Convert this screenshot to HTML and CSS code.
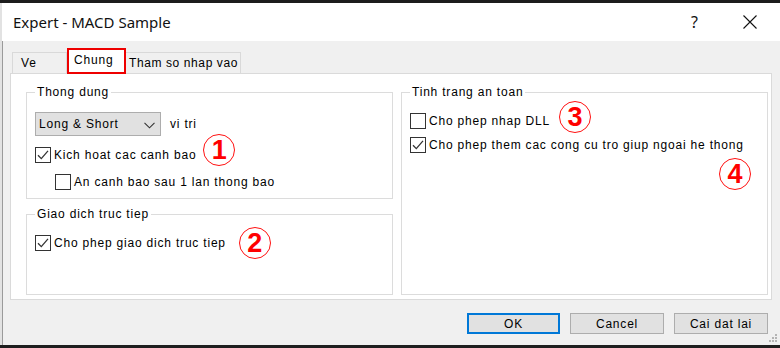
FILE: index.html
```html
<!DOCTYPE html>
<html>
<head>
<meta charset="utf-8">
<link rel="stylesheet" href="styles.css">
</head>
<body>
<div class="topbar"></div>
<div class="titlebar">
  <span class="title">Expert - MACD Sample</span>
  <span class="help">?</span>
  <span class="close"><svg width="14" height="14" viewBox="0 0 14 14"><path d="M0.5 0.5 L13.5 13.5 M13.5 0.5 L0.5 13.5" stroke="#111" stroke-width="1.1" fill="none"/></svg></span>
</div>
<div class="main">
  <div class="tabs">
    <div class="tab tab-ve">Ve</div>
    <div class="tab active">Chung</div>
    <div class="tab tab-tham">Tham so nhap vao</div>
  </div>
  <div class="panel">
    <div class="col">
      <fieldset class="group g1">
        <legend>Thong dung</legend>
        <div class="row">
          <div class="select"><span>Long &amp; Short</span><svg width="11" height="7" viewBox="0 0 11 7"><path d="M0.5 0.8 L5.5 5.8 L10.5 0.8" stroke="#333" stroke-width="1.1" fill="none"/></svg></div>
          <span class="after-select">vi tri</span>
        </div>
        <div class="row">
          <svg class="cb" width="16" height="16" viewBox="0 0 16 16"><rect x="0.5" y="0.5" width="15" height="15" fill="#fff" stroke="#333"/><path d="M3 8.2 L6.3 11.6 L13 3.8" stroke="#333" stroke-width="1.3" fill="none"/></svg>
          <span class="lbl">Kich hoat cac canh bao</span>
          <span class="mark m1">1</span>
        </div>
        <div class="row indent">
          <svg class="cb" width="16" height="16" viewBox="0 0 16 16"><rect x="0.5" y="0.5" width="15" height="15" fill="#fff" stroke="#333"/></svg>
          <span class="lbl">An canh bao sau 1 lan thong bao</span>
        </div>
      </fieldset>
      <fieldset class="group g2">
        <legend>Giao dich truc tiep</legend>
        <div class="row">
          <svg class="cb" width="16" height="16" viewBox="0 0 16 16"><rect x="0.5" y="0.5" width="15" height="15" fill="#fff" stroke="#333"/><path d="M3 8.2 L6.3 11.6 L13 3.8" stroke="#333" stroke-width="1.3" fill="none"/></svg>
          <span class="lbl">Cho phep giao dich truc tiep</span>
          <span class="mark m2">2</span>
        </div>
      </fieldset>
    </div>
    <fieldset class="group g3">
      <legend>Tinh trang an toan</legend>
      <div class="row">
        <svg class="cb" width="16" height="16" viewBox="0 0 16 16"><rect x="0.5" y="0.5" width="15" height="15" fill="#fff" stroke="#333"/></svg>
        <span class="lbl">Cho phep nhap DLL</span>
        <span class="mark m3">3</span>
      </div>
      <div class="row">
        <svg class="cb" width="16" height="16" viewBox="0 0 16 16"><rect x="0.5" y="0.5" width="15" height="15" fill="#fff" stroke="#333"/><path d="M3 8.2 L6.3 11.6 L13 3.8" stroke="#333" stroke-width="1.3" fill="none"/></svg>
        <span class="lbl">Cho phep them cac cong cu tro giup ngoai he thong</span>
      </div>
      <div class="mark-row"><span class="mark m4">4</span></div>
    </fieldset>
  </div>
  <div class="buttons">
    <div class="btn default">OK</div>
    <div class="btn">Cancel</div>
    <div class="btn">Cai dat lai</div>
  </div>
  <svg class="grip" width="8" height="8" viewBox="0 0 8 8"><g fill="#b4b4b4"><rect x="6" y="0" width="2" height="2"/><rect x="3" y="3" width="2" height="2"/><rect x="6" y="3" width="2" height="2"/><rect x="0" y="6" width="2" height="2"/><rect x="3" y="6" width="2" height="2"/><rect x="6" y="6" width="2" height="2"/></g></svg>
</div>
<div class="bottombar"></div>
</body>
</html>
```
FILE: styles.css
```css
* { box-sizing: border-box; }
html, body { margin: 0; padding: 0; }
body {
  width: 780px;
  height: 348px;
  overflow: hidden;
  background: #f0f0f0;
  font-family: "Liberation Sans", Arial, sans-serif;
  font-size: 12px;
  color: #000;
}
.topbar { height: 3px; background: #1c1c1c; }
.bottombar { height: 3px; background: #1e1e1e; }
.titlebar {
  height: 38px;
  background: #fff;
  display: flex;
  align-items: center;
  padding-left: 13px;
  border-left: 2px solid #e2e2e2;
}
.title {
  font-family: "Noto Sans", "Open Sans", sans-serif;
  font-size: 15px;
  color: #111;
  flex: 1;
  margin-left: -2px;
}
.help {
  font-family: "Noto Sans", sans-serif;
  font-size: 16px;
  color: #111;
  margin-right: 45px;
}
.close { display: flex; margin-right: 23px; }
.main {
  position: relative;
  height: 304px;
  border-left: 2px solid #e2e2e2;
  box-shadow: inset 1px 0 0 #9a9a9a;
  padding-top: 7px;
  letter-spacing: 0.8px;
}
.tabs {
  display: flex;
  align-items: flex-end;
  height: 26px;
  padding-left: 10px;
}
.tab {
  height: 21px;
  margin-bottom: 1px;
  border: 1px solid #d9d9d9;
  border-bottom: none;
  background: #f0f0f0;
  display: flex;
  align-items: center;
  padding-left: 8px;
}
.tab-ve { width: 55px; }
.tab-tham { width: 116px; margin-left: -1px; padding-left: 3px; letter-spacing: 0.6px; }
.tab.active {
  position: relative;
  z-index: 1;
  height: 26px;
  width: 59px;
  margin-bottom: 0;
  background: #fff;
  border: 2px solid #ee0000;
  padding-left: 5px;
  padding-bottom: 3px;
}
.panel {
  margin-top: -1px;
  margin-left: 8px;
  width: 762px;
  height: 227px;
  background: #fff;
  border: 1px solid #dadada;
  padding: 11px 3px 4px 15px;
  display: flex;
  gap: 8px;
}
.col { display: flex; flex-direction: column; gap: 8px; }
.group {
  margin: 0;
  width: 367px;
  min-width: 0;
  border: 1px solid #dcdcdc;
  padding: 13px 8px 0 8px;
  display: flex;
  flex-direction: column;
}
.group legend {
  padding: 0 2px;
  line-height: 14px;
  color: #000;
}
.g1 { height: 114px; gap: 11px; }
.g2 { height: 88px; padding-top: 14px; }
.g3 { height: 210px; padding-top: 14px; gap: 8px; }
.row { display: flex; align-items: center; height: 16px; }
.row.indent { padding-left: 20px; }
.g1 .row:first-of-type { height: 24px; }
.cb { flex: none; }
.lbl { margin-left: 3px; white-space: nowrap; }
.select {
  width: 126px;
  height: 24px;
  background: #e1e1e1;
  border: 1px solid #adadad;
  display: flex;
  align-items: center;
  justify-content: space-between;
  padding: 0 5px 0 3px;
}
.select svg { margin-top: 3px; }
.after-select { margin-left: 9px; }
.mark {
  flex: none;
  width: 32px;
  height: 32px;
  border: 1.3px solid #ff1010;
  border-radius: 50%;
  color: #ff0000;
  font-weight: bold;
  font-size: 27px;
  letter-spacing: 0;
  display: flex;
  align-items: center;
  justify-content: center;
}
.m1 { margin: -13px 0 -3px 7px; }
.m2 { margin: -8px 0 -8px 13px; }
.m3 { margin: -12px 0 -4px 9px; }
.mark-row {
  display: flex;
  justify-content: flex-end;
  padding-right: 8px;
  margin-top: -3px;
}
.buttons {
  display: flex;
  justify-content: flex-end;
  gap: 10px;
  margin-top: 13px;
  padding-right: 12px;
}
.btn {
  width: 94px;
  height: 21px;
  background: #e1e1e1;
  border: 1px solid #adadad;
  display: flex;
  align-items: center;
  justify-content: center;
}
.btn.default {
  width: 93px;
  border: 2px solid #0078d7;
}
.grip { position: absolute; right: 3px; bottom: 3px; }
```
